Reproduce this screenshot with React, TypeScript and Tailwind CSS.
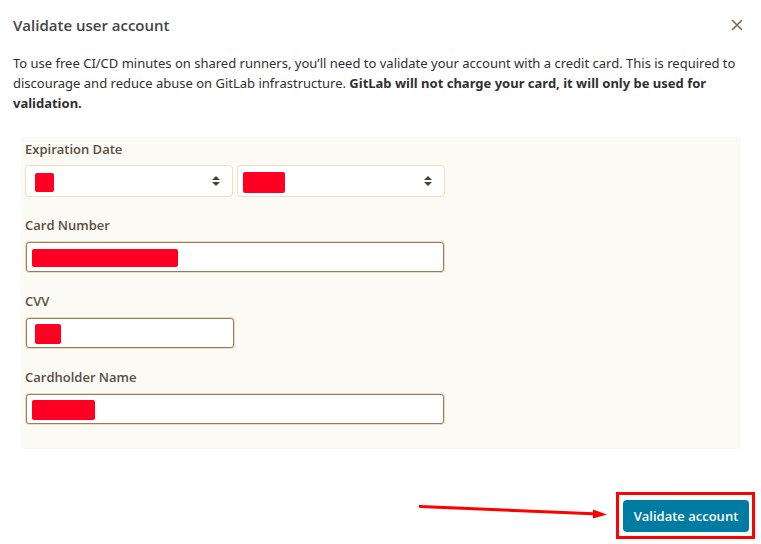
import type { ReactNode } from 'react';

function Redaction({ className }: { className: string }) {
  return <span aria-hidden="true" className={`pointer-events-none absolute rounded-[2px] bg-[#ff0022] ${className}`} />;
}

function SortIcon() {
  return (
    <svg aria-hidden="true" viewBox="0 0 8 10" className="pointer-events-none absolute top-[11px] right-[13px] h-[10px] w-2" fill="#45403c">
      <path d="M4 0 8 4H0zM4 10 0 6h8z" />
    </svg>
  );
}

function SelectBox({ id, label, children }: { id: string; label: string; children: ReactNode }) {
  return (
    <div className="relative min-w-0 flex-1">
      <select
        id={id}
        aria-label={label}
        className="block h-8 w-full appearance-none rounded border border-[#eadfc8] bg-white px-2 text-sm text-[#303030] outline-none"
      >
        <option value="" />
      </select>
      {children}
      <SortIcon />
    </div>
  );
}

function TextField({ id, label, width, children }: { id: string; label: string; width: string; children: ReactNode }) {
  return (
    <div>
      <label htmlFor={id} className="block text-[13px] leading-5 font-semibold text-[#5c4d40]">
        {label}
      </label>
      <div className={`relative mt-[6px] ${width}`}>
        <div className="rounded bg-[#eadcc2] p-px">
          <input
            id={id}
            type="text"
            className="block h-[30px] w-full rounded-[3px] border border-[#9b7b5a] bg-white px-2 text-sm text-[#303030] outline-none"
          />
        </div>
        {children}
      </div>
    </div>
  );
}

export default function App() {
  return (
    <main className="bg-white pt-[13px] pr-3 pb-3 pl-[13px] font-['Open_Sans','Noto_Sans',sans-serif] text-[#303030]">
      <header className="flex h-6 items-center justify-between">
        <h1 className="text-[15px] leading-6 font-semibold text-[#444444]">Validate user account</h1>
        <button type="button" aria-label="Close" className="flex size-6 items-center justify-center">
          <svg viewBox="0 0 12 12" className="size-3" fill="none" stroke="#806650" strokeWidth="1.6" strokeLinecap="round">
            <path d="m1.5 1.5 9 9m0-9-9 9" />
          </svg>
        </button>
      </header>

      <p className="mt-4 font-['Noto_Sans','Open_Sans',sans-serif] text-[13px] leading-5">
        To use free CI/CD minutes on shared runners, you’ll need to validate your account with a credit card. This is required to
        discourage and reduce abuse on GitLab infrastructure.{' '}
        <strong className="font-bold">GitLab will not charge your card, it will only be used for validation.</strong>
      </p>

      <form>
        <div className="mt-6 mr-2 ml-2 flex flex-col gap-[18px] bg-[#fbfaf4] px-1 pt-[2px] pb-6">
          <fieldset>
            <legend className="block text-[13px] leading-5 font-semibold text-[#5c4d40]">Expiration Date</legend>
            <div className="mt-[6px] flex max-w-[420px] gap-1">
              <SelectBox id="month" label="Expiration month">
                <Redaction className="top-2 left-[10px] h-[19px] w-[19px]" />
              </SelectBox>
              <SelectBox id="year" label="Expiration year">
                <Redaction className="top-[7px] left-[6px] h-[21px] w-[42px]" />
              </SelectBox>
            </div>
          </fieldset>
          <TextField id="card-number" label="Card Number" width="max-w-[420px]">
            <Redaction className="top-2 left-[7px] h-[18px] w-[146px]" />
          </TextField>
          <TextField id="cvv" label="CVV" width="max-w-[210px]">
            <Redaction className="top-[7px] left-[10px] h-5 w-[26px]" />
          </TextField>
          <TextField id="cardholder" label="Cardholder Name" width="max-w-[420px]">
            <Redaction className="top-[7px] left-[7px] h-5 w-[63px]" />
          </TextField>
        </div>

        <div className="mt-[51px] flex justify-end">
          <div className="relative">
            <button type="button" className="block h-8 w-[126px] rounded bg-[#007ca3] text-[13px] leading-5 font-semibold whitespace-nowrap text-white">
              Validate account
            </button>
            <span aria-hidden="true" className="pointer-events-none absolute -top-2 -right-[6px] -bottom-[7px] -left-[7px] border-3 border-[#ff0000]" />
            <svg
              aria-hidden="true"
              viewBox="0 0 190 20"
              className="pointer-events-none absolute top-0 right-[142px] h-5 w-[190px]"
              fill="#ff0000"
            >
              <path d="M2 5 3.500 5 176 12.300 176 9.500 190 14.500 176 18.500 176 15.300 3 8Q1 7 2 5Z" />
            </svg>
          </div>
        </div>
      </form>
    </main>
  );
}
